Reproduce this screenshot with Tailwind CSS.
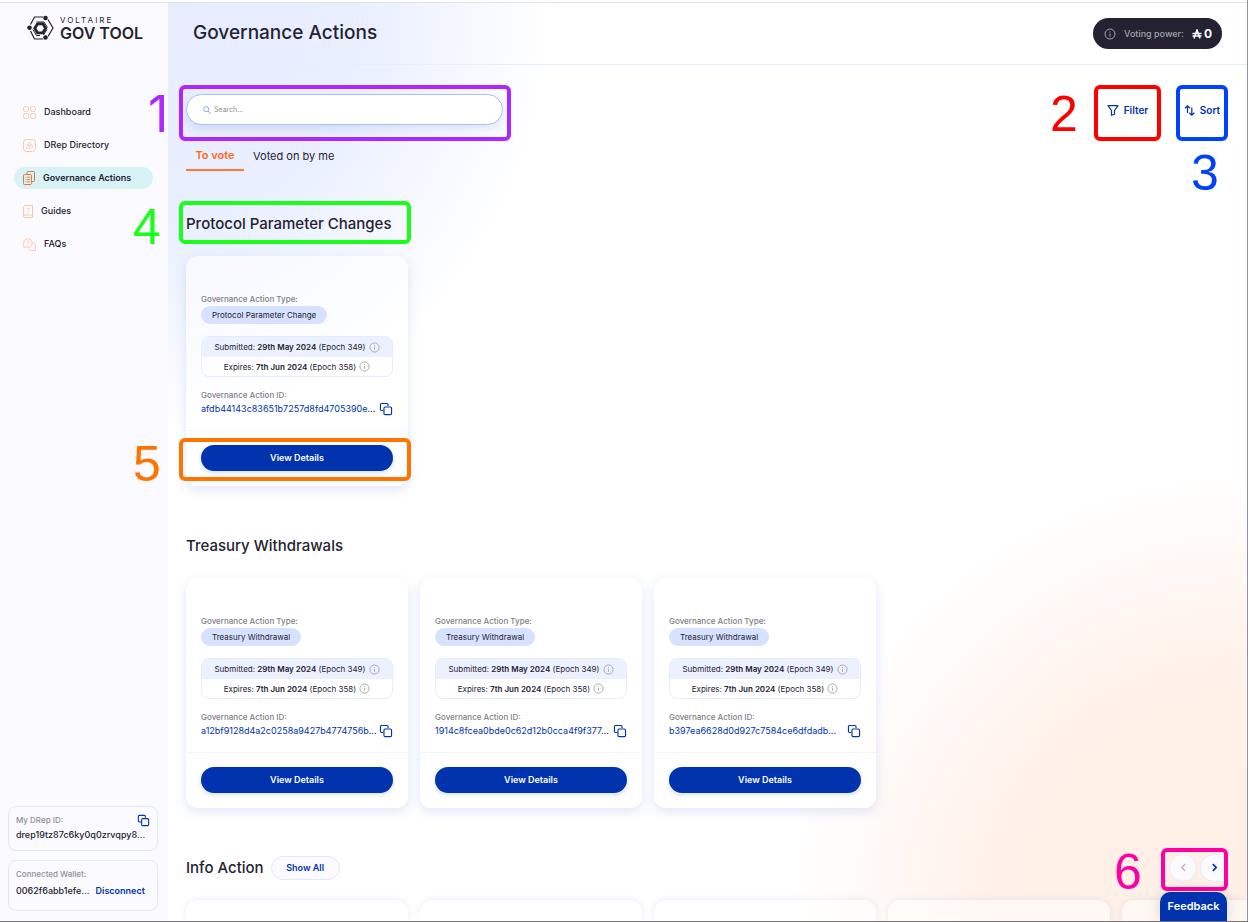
<!DOCTYPE html>
<html lang="en">
<head>
<meta charset="utf-8">
<title>Governance Actions</title>
<script src="https://cdn.jsdelivr.net/npm/@tailwindcss/browser@4"></script>
</head>
<body class="h-screen overflow-hidden bg-white font-['Inter',sans-serif] text-[#242232]">
<svg class="hidden">
  <symbol id="copy" viewBox="0 0 24 24"><path d="M15.500 7V4.500a2 2 0 0 0-2-2h-9a2 2 0 0 0-2 2v8a2 2 0 0 0 2 2H7M10.500 8.500h9a2 2 0 0 1 2 2v9a2 2 0 0 1-2 2h-9a2 2 0 0 1-2-2v-9a2 2 0 0 1 2-2z" fill="none" stroke="currentColor" stroke-width="2"/></symbol>
  <symbol id="info" viewBox="0 0 24 24"><circle cx="12" cy="12" r="10" fill="none" stroke="currentColor" stroke-width="2"/><path d="M12 11v6M12 7v2" fill="none" stroke="currentColor" stroke-width="2"/></symbol>
</svg>
<div class="flex h-full flex-col border-r border-b border-r-[#8b95a3] border-b-[#77777b]">
  <div class="h-[3px] shrink-0 border-b border-[#e3e3e3]"></div>
  <div class="flex min-h-0 grow">
    <aside class="flex w-42 shrink-0 flex-col bg-[#fbfbff]">
      <a href="#" aria-label="Voltaire Gov Tool" class="flex items-center gap-[6px] pt-3 pl-[27px]">
        <svg class="h-[26px] w-[27px]" viewBox="0 0 27 26" fill="none" stroke="#242232"><path d="M3.500 9.500 7.500 2H16M21 4.500 26 13 21 21.500M16 24H7.500L3.500 16" stroke-width="1.200"/><path d="M9.500 7H17l3.500 5.500M20 14.500l-3.500 5.500M13 20.500H9.500L6 14.500" stroke-width="1"/><path d="M10.500 8.800h5.400l2.700 4.500-2.700 4.500h-5.400l-2.700-4.500z" stroke-width="2.800"/><g fill="#242232" stroke="none"><circle cx="18.500" cy="3" r="2.300"/><circle cx="2.500" cy="12.800" r="2.300"/><circle cx="18.500" cy="22.500" r="2.300"/></g></svg>
        <span class="flex flex-col"><span class="text-[8px] leading-[9px] tracking-[2px]">VOLTAIRE</span><span class="text-[16px] leading-4 font-semibold">GOV TOOL</span></span>
      </a>
      <nav class="mt-[60px] flex flex-col gap-[11px] pl-[14px] text-[9px] font-medium">
        <a href="#" class="flex h-[22px] w-[139px] items-center gap-2 pl-[9px]"><svg class="size-[13px] text-[#fbc8ab]" viewBox="0 0 13 13" fill="none" stroke="currentColor"><rect x=".5" y=".5" width="5" height="5" rx="1.800"/><rect x="7.500" y=".5" width="5" height="5" rx="1.800"/><rect x=".5" y="7.500" width="5" height="5" rx="1.800"/><rect x="7.500" y="7.500" width="5" height="5" rx="1.800"/></svg>Dashboard</a>
        <a href="#" class="flex h-[22px] w-[139px] items-center gap-2 pl-[9px]"><svg class="size-[13px] text-[#fbc8ab]" viewBox="0 0 13 13" fill="none" stroke="currentColor"><rect x=".5" y=".5" width="12" height="12" rx="3"/><circle cx="6.500" cy="4.900" r="1.700" stroke-width=".8"/><circle cx="4.900" cy="7.700" r="1.700" stroke-width=".8"/><circle cx="8.100" cy="7.700" r="1.700" stroke-width=".8"/></svg>DRep Directory</a>
        <a href="#" aria-current="page" class="flex h-[22px] w-[139px] items-center gap-[7px] rounded-full bg-[#d8f3f7] pl-[9px] font-semibold"><svg class="h-[14px] w-[13px] text-[#f0742e]" viewBox="0 0 13 14" fill="none" stroke="currentColor"><path d="M4 3V1.500a1 1 0 0 1 1-1h5.500a1 1 0 0 1 1 1v8a1 1 0 0 1-1 1H9"/><rect x=".5" y="3.500" width="8" height="10" rx="1"/><path d="M2.500 6.200H3.300M4.200 6.200H6.800M2.500 8.500H3.300M4.200 8.500H6.800M2.500 10.800H3.300M4.200 10.800H6.800"/></svg>Governance Actions</a>
        <a href="#" class="flex h-[22px] w-[139px] items-center gap-[7px] pl-[9px]"><svg class="h-[13px] w-[11px] text-[#fbc8ab]" viewBox="0 0 11 13" fill="none" stroke="currentColor"><path d="M9.500 10V.500H2A1.500 1.500 0 0 0 .500 2v9A1.500 1.500 0 0 0 2 12.500h7.500V10H2A1.500 1.500 0 0 0 .500 11"/><path d="M3.800 4.300c0-1.900 2.600-1.600 2.600 0 0 .9-1.300.8-1.300 1.900M5.100 7.200v1" stroke-width=".9"/></svg>Guides</a>
        <a href="#" class="flex h-[22px] w-[139px] items-center gap-2 pl-[9px]"><svg class="size-[13px] text-[#fbc8ab]" viewBox="0 0 13 13" fill="none" stroke="currentColor"><path d="M.700 9.200V4.800a4.200 4.200 0 1 1 4.200 4.400zM10 4.300a3.900 3.900 0 0 1 2.400 3.600v4.500H8.500a4 4 0 0 1-3.200-1.700"/><path d="M3.700 4.200c0-1.700 2.500-1.400 2.500 0 0 .9-1.200.8-1.200 1.600M5 6.600v1" stroke-width=".9"/></svg>FAQs</a>
      </nav>
      <div class="mt-auto mb-[10px] ml-2 flex w-[150px] flex-col gap-[9px] text-[9px] font-medium">
        <div class="h-[45px] rounded-lg border border-[#e1e8fb] px-[7px] pt-[7px]">
          <div class="flex h-3 items-center justify-between text-[8px] text-[#8e8e93]">My DRep ID:<button aria-label="Copy DRep ID" class="text-[#0033ad]"><svg class="size-[13px]"><use href="#copy"/></svg></button></div>
          <div class="mt-[2px] truncate leading-[14px]">drep19tz87c6ky0q0zrvqpy8...</div>
        </div>
        <div class="h-[51px] rounded-lg border border-[#e1e8fb] px-[7px] pt-[7px]">
          <div class="text-[8px] leading-3 text-[#8e8e93]">Connected Wallet:</div>
          <div class="mt-1 flex gap-[6px] leading-[14px]"><span>0062f6abb1efe...</span><button class="font-semibold text-[#0033ad]">Disconnect</button></div>
        </div>
      </div>
    </aside>
    <main class="relative flex min-w-0 grow flex-col bg-[radial-gradient(ellipse_385px_430px_at_0px_0px,#e7edff_0%,#e9efff_50%,#fff0_100%),radial-gradient(ellipse_460px_450px_at_100%_100%,#ffefe5_0%,#fff1e9_55%,#fff0_100%)]">
      <header class="flex h-[62px] shrink-0 items-center justify-between border-b border-[#e6eefb] px-[25px]">
        <h1 class="text-[19px] font-medium">Governance Actions</h1>
        <div class="flex h-[31px] w-[129px] items-center rounded-full bg-[#242232] pl-[11px] text-[9px] font-medium text-[#a3a3ab]"><svg class="mr-2 size-3"><use href="#info"/></svg>Voting power:<span class="ml-auto flex items-center gap-[2px] pr-[10px] text-[12px] font-bold text-white"><svg class="h-[10px] w-[10px]" viewBox="0 0 10 10" fill="none" stroke="currentColor" stroke-width="1.500"><path d="M2 9.500 5 1l3 8.500M.500 4.500h9M.500 7h9"/></svg>0</span></div>
      </header>
      <div class="flex shrink-0 items-start justify-between pt-5 pr-[19px] pl-[11px]">
        <div class="relative h-14 w-[332px] rounded-md border-4 border-[#b026ff] pt-[5px] pl-[3px]">
          <span aria-hidden="true" class="absolute top-0 -left-[35px] text-[50px] leading-[50px] text-[#b026ff]">1</span>
          <label class="flex h-[31px] w-[317px] items-center gap-[3px] rounded-full border border-[#a9c0fa] bg-white pl-4 shadow-[0_4px_10px_#2f62dc26]"><svg class="size-[8px] text-[#8fa9e6]" viewBox="0 0 8 8" fill="none" stroke="currentColor"><circle cx="3.200" cy="3.200" r="2.500"/><path d="m5 5 2.700 2.700"/></svg><input type="text" placeholder="Search..." aria-label="Search" class="w-60 pt-px text-[7px] outline-none placeholder:text-[#8e8e93]"></label>
        </div>
        <div class="flex gap-[15px] text-[10px] font-semibold text-[#0033ad]">
          <div class="relative h-14 w-[67px] rounded-md border-4 border-[#ff0000]">
            <span aria-hidden="true" class="absolute top-0 -left-12 font-['Liberation_Sans',sans-serif] text-[50px] leading-[50px] font-normal text-[#ff0000]">2</span>
            <button class="flex h-[42px] w-full items-center justify-center gap-[5px]"><svg class="h-[11px] w-3" viewBox="0 0 12 11" fill="none" stroke="currentColor" stroke-width="1.200" stroke-linejoin="round"><path d="M1 .700h10L7.500 5.500v3.800l-3 1V5.500z"/></svg>Filter</button>
          </div>
          <div class="relative h-14 w-[52px] rounded-md border-4 border-[#0040ff]">
            <span aria-hidden="true" class="absolute top-[59px] left-[11px] font-['Liberation_Sans',sans-serif] text-[50px] leading-[50px] font-normal text-[#0040ff]">3</span>
            <button class="flex h-[42px] w-full items-center justify-center gap-[5px]"><svg class="h-[11px] w-[11px] shrink-0" viewBox="0 0 11 11" fill="none" stroke="currentColor" stroke-width="1.200"><path d="M3.500 8V1M1 3.200 3.500.800 6 3.200M7.800 2.500v7.500M5.300 7.800l2.500 2.400 2.500-2.400"/></svg>Sort</button>
          </div>
        </div>
      </div>
      <div role="tablist" class="flex shrink-0 pl-[18px] text-[11px]">
        <button role="tab" aria-selected="true" class="h-[30px] w-[58px] border-b-2 border-[#ff7a2e] font-semibold text-[#ff6a13]">To vote</button>
        <button role="tab" aria-selected="false" class="h-[30px] px-[9px]">Voted on by me</button>
      </div>
      <section class="mt-[30px] shrink-0 pl-[11px]">
        <div class="relative flex h-[43px] w-[232px] items-center rounded-md border-4 border-[#1aff1a] pt-[3px] pl-[3px]">
          <span aria-hidden="true" class="absolute -top-[3px] -left-[50px] font-['Liberation_Sans',sans-serif] text-[50px] leading-[50px] text-[#1aff1a]">4</span>
          <h2 class="text-[15px] font-medium whitespace-nowrap">Protocol Parameter Changes</h2>
        </div>
        <div id="protocol" class="mt-3 flex gap-3 pl-[7px]"></div>
      </section>
      <section class="mt-[49px] shrink-0 pl-[18px]">
        <h2 class="text-[15px] leading-[22px] font-medium">Treasury Withdrawals</h2>
        <div id="treasury" class="mt-[21px] flex gap-3"></div>
      </section>
      <section class="mt-12 flex min-h-0 grow flex-col pl-[18px]">
        <div class="relative flex h-6 shrink-0 items-center gap-[7px]">
          <h2 class="text-[15px] font-medium">Info Action</h2>
          <button class="h-6 w-[69px] rounded-full border border-[#e1e8fb] bg-[#fbfbff] text-[9px] font-semibold text-[#0033ad]">Show All</button>
          <div class="absolute -top-2 right-[19px] flex h-[43px] w-[67px] items-center gap-[3px] rounded-md border-4 border-[#ff00a0] pb-1 pl-1">
            <span aria-hidden="true" class="absolute -top-[5px] -left-[51px] font-['Liberation_Sans',sans-serif] text-[50px] leading-[50px] text-[#ff00a0]">6</span>
            <button aria-label="Previous" class="flex size-7 shrink-0 items-center justify-center rounded-full border border-[#e8ecfa] bg-[#fbfbff] text-[#b9b9c9]"><svg class="size-[9px]" viewBox="0 0 8 8" fill="none" stroke="currentColor" stroke-width="1.300"><path d="M5.500 1 2.500 4l3 3"/></svg></button>
            <button aria-label="Next" class="flex h-7 w-6 shrink-0 items-center justify-center rounded-l-full border border-r-0 border-[#e8ecfa] bg-[#fbfbff] pl-1 text-[#0033ad]"><svg class="size-[9px]" viewBox="0 0 8 8" fill="none" stroke="currentColor" stroke-width="1.500"><path d="m2.500 1 3 3-3 3"/></svg></button>
          </div>
        </div>
        <div class="mt-3 -ml-2 flex min-h-0 flex-1 gap-3 overflow-hidden pt-2 pl-2">
          <div class="w-[222px] shrink-0 rounded-t-xl bg-white/50 shadow-[0_0_6px_#2f62dc1f]"></div>
          <div class="w-[222px] shrink-0 rounded-t-xl bg-white/50 shadow-[0_0_6px_#2f62dc1f]"></div>
          <div class="w-[222px] shrink-0 rounded-t-xl bg-white/50 shadow-[0_0_6px_#2f62dc1f]"></div>
          <div class="w-[222px] shrink-0 rounded-t-xl bg-white/50 shadow-[0_0_6px_#2f62dc1f]"></div>
          <div class="min-w-0 flex-1 rounded-tl-xl bg-white/50 shadow-[0_0_6px_#2f62dc1f]"></div>
        </div>
      </section>
      <button class="absolute right-5 bottom-0 h-[29px] w-[67px] rounded-t-[10px] bg-[#0033ad] text-[11px] font-semibold text-white shadow-[0_0_14px_#00000026]">Feedback</button>
    </main>
  </div>
</div>
<template id="card">
  <article class="relative w-[222px] shrink-0 rounded-xl bg-white/50 text-[8px] shadow-[0_4px_12px_#2f62dc29]">
    <div class="h-[174px] px-[15px] pt-[37px]">
      <div class="leading-3 font-medium text-[#808086]">Governance Action Type:</div>
      <div data-type class="mt-[1px] inline-flex h-[18px] items-center rounded-full bg-[#d6e2ff] px-[11px]"></div>
      <div class="mt-3 overflow-hidden rounded-lg border border-[#e6ebff]">
        <div class="flex h-5 items-center justify-center gap-[3px] bg-[#ecf1ff]"><span>Submitted: <b class="font-semibold">29th May 2024</b> (Epoch 349)</span><svg class="size-[11px] text-[#a4a4a8]"><use href="#info"/></svg></div>
        <div class="flex h-[19px] items-center justify-center gap-[3px] bg-white/50"><span>Expires: <b class="font-semibold">7th Jun 2024</b> (Epoch 358)</span><svg class="size-[11px] text-[#a4a4a8]"><use href="#info"/></svg></div>
      </div>
      <div class="mt-3 leading-3 font-medium text-[#808086]">Governance Action ID:</div>
      <div class="flex h-4 items-center justify-between text-[9px] text-[#0033ad]"><span data-id></span><button aria-label="Copy ID"><svg class="size-[14px]"><use href="#copy"/></svg></button></div>
    </div>
    <div class="h-14 rounded-b-xl border-t border-[#f4f6fd] bg-white px-[15px] pt-[14px]">
      <button class="h-[26px] w-full rounded-full bg-[#0033ad] text-[9px] font-semibold text-white shadow-[0_2px_5px_#2f62dc33]">View Details</button>
    </div>
  </article>
</template>
<template id="callout">
  <div aria-hidden="true" class="pointer-events-none absolute bottom-[5px] -left-[7px] h-[43px] w-[232px] rounded-md border-4 border-[#ff7300]"><span class="absolute -top-[3px] -left-[50px] font-['Liberation_Sans',sans-serif] text-[50px] leading-[50px] text-[#ff7300]">5</span></div>
</template>
<script>
const add = (list, type, id) => {
  const card = document.getElementById('card').content.cloneNode(true);
  card.querySelector('[data-type]').textContent = type;
  card.querySelector('[data-id]').textContent = id;
  document.getElementById(list).append(card);
};
add('protocol', 'Protocol Parameter Change', 'afdb44143c83651b7257d8fd4705390e...');
add('treasury', 'Treasury Withdrawal', 'a12bf9128d4a2c0258a9427b4774756b...');
add('treasury', 'Treasury Withdrawal', '1914c8fcea0bde0c62d12b0cca4f9f377...');
add('treasury', 'Treasury Withdrawal', 'b397ea6628d0d927c7584ce6dfdadb...');
document.querySelector('#protocol article').append(document.getElementById('callout').content.cloneNode(true));
</script>
</body>
</html>
